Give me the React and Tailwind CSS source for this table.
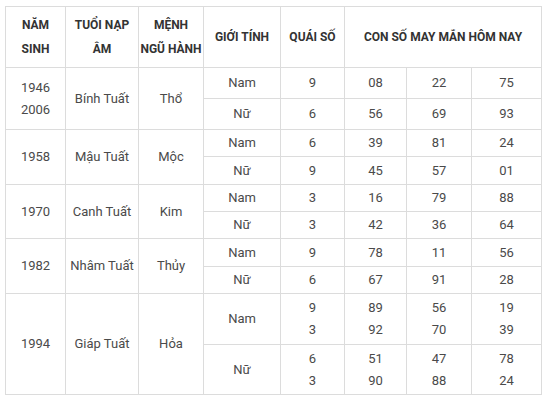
const rows = [
  {
    year: ['1946', '2006'], tuoi: 'Bính Tuất', menh: 'Thổ',
    sub: [
      { g: 'Nam', q: ['9'], n: [['08', '22', '75']], h: 'h-[31px]' },
      { g: 'Nữ', q: ['6'], n: [['56', '69', '93']], h: 'h-[31px]' },
    ],
  },
  {
    year: ['1958'], tuoi: 'Mậu Tuất', menh: 'Mộc',
    sub: [
      { g: 'Nam', q: ['6'], n: [['39', '81', '24']], h: 'h-[27px]' },
      { g: 'Nữ', q: ['9'], n: [['45', '57', '01']], h: 'h-[28px]' },
    ],
  },
  {
    year: ['1970'], tuoi: 'Canh Tuất', menh: 'Kim',
    sub: [
      { g: 'Nam', q: ['3'], n: [['16', '79', '88']], h: 'h-[27px]' },
      { g: 'Nữ', q: ['3'], n: [['42', '36', '64']], h: 'h-[27px]' },
    ],
  },
  {
    year: ['1982'], tuoi: 'Nhâm Tuất', menh: 'Thủy',
    sub: [
      { g: 'Nam', q: ['9'], n: [['78', '11', '56']], h: 'h-[28px]' },
      { g: 'Nữ', q: ['6'], n: [['67', '91', '28']], h: 'h-[27px]' },
    ],
  },
  {
    year: ['1994'], tuoi: 'Giáp Tuất', menh: 'Hỏa',
    sub: [
      { g: 'Nam', q: ['9', '3'], n: [['89', '56', '19'], ['92', '70', '39']], h: 'h-[51px]' },
      { g: 'Nữ', q: ['6', '3'], n: [['51', '47', '78'], ['90', '88', '24']], h: 'h-[50px]' },
    ],
  },
];

const cell = 'border border-[#dcdcdc] text-center align-middle p-0';

function Lines({ items }) {
  return items.map((t, i) => <div key={i}>{t}</div>);
}

export default function App() {
  return (
    <div className="w-[546px] h-[402px] bg-white pt-[6px] pl-[5px] font-['Roboto',sans-serif] text-[13px] leading-[22px] text-[#4a4a4a]">
      <table className="table-fixed border-collapse w-[536px]">
        <colgroup>
          <col className="w-[60px]" />
          <col className="w-[73px]" />
          <col className="w-[65px]" />
          <col className="w-[77px]" />
          <col className="w-[64px]" />
          <col className="w-[62px]" />
          <col className="w-[65px]" />
          <col className="w-[70px]" />
        </colgroup>
        <thead>
          <tr className="h-[61px] font-bold text-[#333] text-[12px] leading-[24px]">
            <th className={cell}>NĂM<br />SINH</th>
            <th className={cell}>TUỔI NẠP<br />ÂM</th>
            <th className={`${cell} whitespace-nowrap`}>MỆNH<br />NGŨ HÀNH</th>
            <th className={cell}>GIỚI TÍNH</th>
            <th className={cell}>QUÁI SỐ</th>
            <th className={cell} colSpan={3}>CON SỐ MAY MẮN HÔM NAY</th>
          </tr>
        </thead>
        <tbody>
          {rows.map((r) =>
            r.sub.map((s, i) => (
              <tr key={r.year[0] + i} className={s.h}>
                {i === 0 && (
                  <>
                    <td className={cell} rowSpan={2}><Lines items={r.year} /></td>
                    <td className={cell} rowSpan={2}>{r.tuoi}</td>
                    <td className={cell} rowSpan={2}>{r.menh}</td>
                  </>
                )}
                <td className={cell}>{s.g}</td>
                <td className={cell}><Lines items={s.q} /></td>
                {[0, 1, 2].map((c) => (
                  <td key={c} className={cell}>
                    <Lines items={s.n.map((line) => line[c])} />
                  </td>
                ))}
              </tr>
            ))
          )}
        </tbody>
      </table>
    </div>
  );
}
